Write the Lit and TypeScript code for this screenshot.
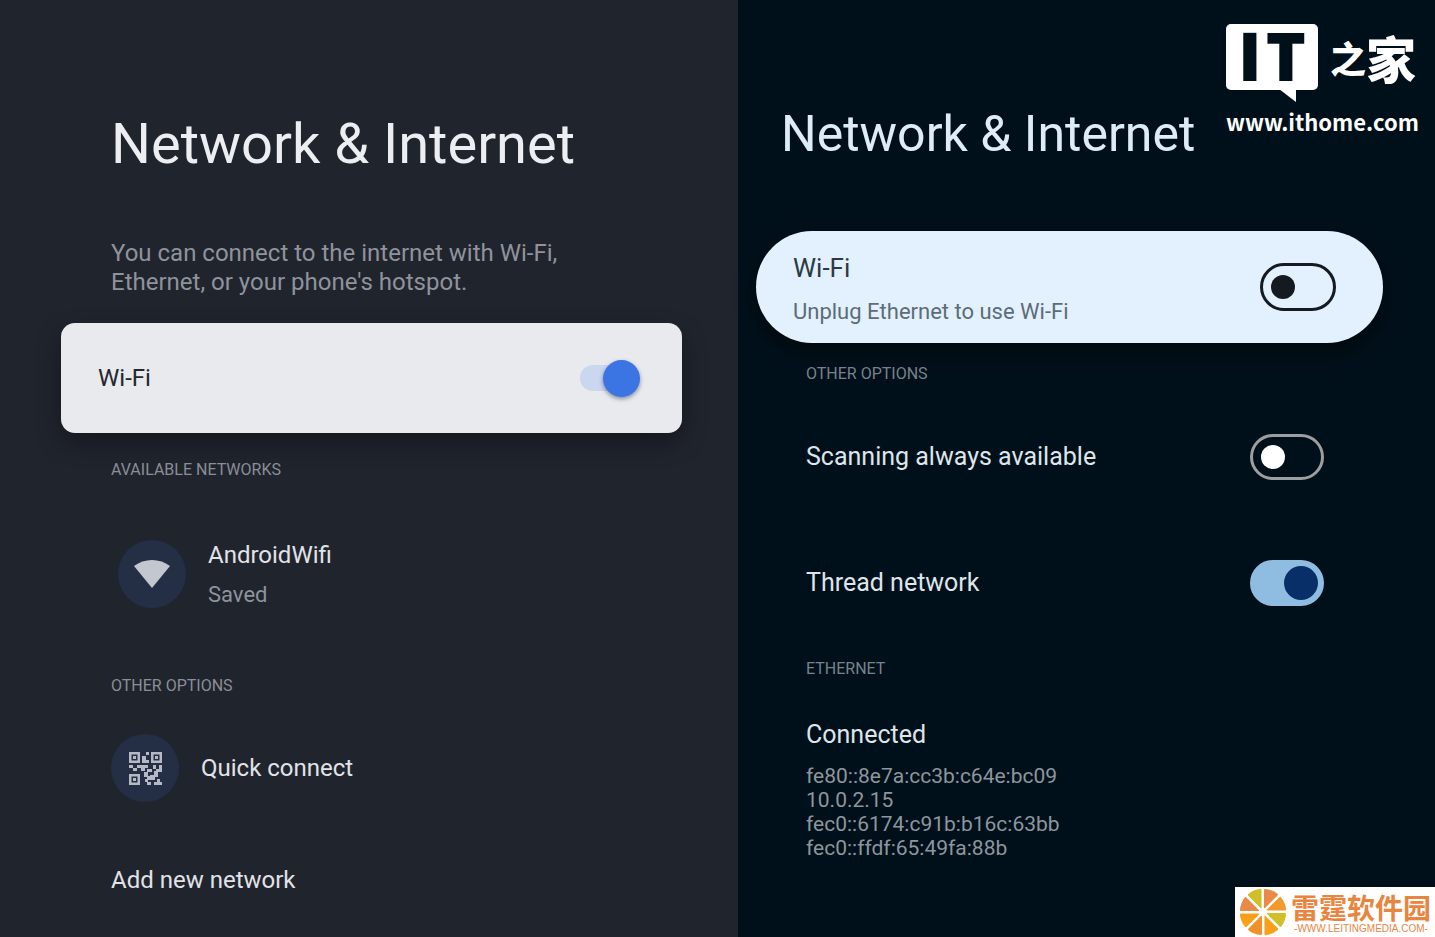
import { LitElement, html, css, svg } from "lit";
import { customElement } from "lit/decorators.js";

@customElement("tv-mark")
class TvMark extends LitElement {
  static styles = css`
    :host { display: block; color: #fff; }
    .logo { display: flex; align-items: center; }
    .bubble { position: relative; box-sizing: border-box; width: 93px; height: 66px; display: flex; justify-content: center; gap: 4px; border-radius: 5px; background: #fff; color: #00101a; font: 800 68px/62px "Open Sans", sans-serif; white-space: nowrap; }
    .tail { position: absolute; left: 53px; top: 65px; width: 17px; height: 13px; }
    .zhi, .jia { font-family: "Noto Sans CJK SC", sans-serif; font-weight: 900; line-height: 66px; }
    .zhi { font-size: 36px; margin-left: 12px; }
    .jia { font-size: 50px; }
    .site { margin-top: 16px; color: #fff; font: 700 22px/30px "Noto Sans CJK SC", sans-serif; text-decoration: none; display: block; }
  `;
  render() {
    return html`
      <div class="logo">
        <span class="bubble"><span>I</span><span>T</span><svg class="tail" viewBox="0 0 17 13"><path d="M0 0H17V13Z" fill="#fff"/></svg></span>
        <span class="zhi">之</span><span class="jia">家</span>
      </div>
      <a class="site" href="#">www.ithome.com</a>`;
  }
}

@customElement("app-root")
class AppRoot extends LitElement {
  static styles = css`
    :host { display: grid; grid-template-columns: 738fr 697fr; min-height: 100vh; position: relative; font-family: Roboto, sans-serif; background: #00101a; overflow: hidden; }
    h1, h2, p, dl, dd, dt { margin: 0; font-weight: 400; }
    .panel { box-sizing: border-box; }
    .classic { background: #20242d; padding: 112px 56px 40px 61px; color: #e1e3e8; }
    .modern { background: #00101a; padding: 102px 52px 40px 18px; color: #dfe5ea; }
    .inset { margin-left: 50px; }
    h1 { font-size: 56px; line-height: 64px; color: #eceef1; }
    .modern h1 { font-size: 50px; margin-left: 25px; color: #dfecf7; }
    .intro { margin-top: 63px; font-size: 24px; line-height: 29px; color: #8f939b; max-width: 480px; }
    .card { display: flex; align-items: center; justify-content: space-between; box-sizing: border-box; cursor: pointer; }
    .classic .card { margin-top: 26px; height: 110px; padding: 0 42px 0 37px; border-radius: 14px; background: #e8eaed; color: #24272d; box-shadow: 0 10px 24px rgba(0, 0, 0, 0.35); }
    .modern .card { margin-top: 65px; height: 112px; padding: 0 47px 0 37px; border-radius: 56px; background: #e2f1fd; color: #2c3a45; box-shadow: 0 8px 20px rgba(0, 0, 0, 0.5); }
    .lines { display: flex; flex-direction: column; gap: 10px; }
    .modern .lines { gap: 14px; padding-top: 4px; }
    .title { font-size: 24px; line-height: 32px; }
    .modern .title { font-size: 25px; }
    .modern .card .title { font-size: 26px; }
    .sub { font-size: 22px; line-height: 28px; color: #8f939b; }
    .modern .sub { color: #5c6c78; }
    h2 { font-size: 16px; line-height: 20px; color: #8a8e96; }
    .classic h2 { margin-top: 27px; }
    .modern h2 { color: #78828a; margin-top: 21px; }
    .item { display: flex; align-items: center; gap: 22px; border: 0; padding: 0; background: none; color: inherit; font: inherit; text-align: left; cursor: pointer; }
    .network { margin-top: 59px; padding-left: 7px; }
    .classic .later { margin-top: 67px; }
    .quick { margin-top: 38px; }
    .add { margin-top: 62px; }
    .disc { width: 68px; height: 68px; border-radius: 50%; background: #242e44; display: grid; place-items: center; }
    .wifi { width: 36px; height: 28px; }
    .qr { width: 33px; height: 33px; }
    .option { display: flex; align-items: center; justify-content: space-between; height: 46px; margin-right: 59px; cursor: pointer; }
    .scan { margin-top: 50px; }
    .thread { margin-top: 80px; }
    .modern .later { margin-top: 53px; }
    .switch { appearance: none; margin: 0; box-sizing: border-box; width: 74px; height: 46px; border-radius: 24px; border: 3px solid #9c9fa2; display: flex; align-items: center; padding: 0 8px; cursor: pointer; }
    .switch::before { content: ""; width: 24px; height: 24px; border-radius: 50%; background: #fff; }
    .switch:checked { background: #8fbde2; border-color: #8fbde2; justify-content: flex-end; padding: 0 3px; }
    .switch:checked::before { width: 34px; height: 34px; background: #082f68; }
    .card .switch { width: 76px; height: 48px; border-color: #141a20; }
    .card .switch::before { background: #141a20; }
    .slider { appearance: none; position: relative; margin: 0; width: 60px; height: 38px; display: flex; align-items: center; justify-content: flex-end; cursor: pointer; }
    .slider::after { content: ""; position: absolute; left: 0; top: 6px; width: 50px; height: 26px; border-radius: 13px; background: #cbd7ef; }
    .slider::before { content: ""; position: relative; z-index: 1; width: 37px; height: 37px; border-radius: 50%; background: #3b75e3; box-shadow: 0 2px 4px rgba(30, 50, 90, 0.5); }
    .status { margin-top: 40px; }
    .status dt { font-size: 25px; line-height: 32px; }
    .status dd { font-size: 21px; line-height: 24px; color: #8d969d; }
    .status dt + dd { margin-top: 13px; }
    .mark { position: absolute; right: 19px; top: 24px; width: 190px; }
    .badge { position: absolute; right: 0; bottom: 0; box-sizing: border-box; width: 200px; height: 50px; padding: 1px 4px; background: #fff; display: flex; align-items: center; gap: 4px; }
    .fruit { width: 48px; height: 48px; flex: none; }
    .brand { display: flex; flex-direction: column; align-items: center; color: #e8853f; white-space: nowrap; }
    .name { font: 700 28px/34px "Noto Sans CJK SC", sans-serif; }
    .url { font: 10px/10px "Liberation Sans", sans-serif; }
  `;

  private slice(i: number, fill: string) {
    return svg`<path transform="rotate(${i * 45} 24 24)" fill=${fill} d="M25 19.500V2Q25 .8 26.200 .9Q33 1.500 38.500 5.700Q39.400 6.500 38.500 7.400L26.600 19.400Q25 21 25 19.500Z"/>`;
  }

  render() {
    const fills = ["#e98a48", "#f39a2c", "#d0bf28", "#f9a01b", "#f0922c", "#f9a01b", "#e98a48", "#d0bf28"];
    return html`
      <section class="panel classic">
        <h1 class="inset">Network &amp; Internet</h1>
        <p class="intro inset">You can connect to the internet with Wi-Fi, Ethernet, or your phone's hotspot.</p>
        <label class="card" for="wifi-a"><span class="title">Wi-Fi</span><input class="slider" id="wifi-a" type="checkbox" checked></label>
        <h2 class="inset">AVAILABLE NETWORKS</h2>
        <button class="item inset network">
          <span class="disc"><svg class="wifi" viewBox="0 0 36 28"><path fill="#c3c7ce" d="M18 28 0 6Q8 0 18 0T36 6Z"/></svg></span>
          <span class="lines"><span class="title">AndroidWifi</span><span class="sub">Saved</span></span>
        </button>
        <h2 class="inset later">OTHER OPTIONS</h2>
        <button class="item inset quick">
          <span class="disc"><svg class="qr" viewBox="0 0 33 33" fill="#b4b9c4"><path fill-rule="evenodd" d="M0 0H11V11H0ZM2.500 2.500V8.500H8.500V2.500ZM22 0H33V11H22ZM24.500 2.500V8.500H30.500V2.500ZM0 22H11V33H0ZM2.500 24.500V30.500H8.500V24.500Z"/><path d="M4 4h3v3H4zM26 4h3v3h-3zM4 26h3v3H4zM17 0h3v3h-3zM13 4h4v4h3v3h-7zM0 13h4v3H0zM4 16h4v3H4zM8 13h11v3h-3v3h-4v-3H8zM18 17h5v3h-5zM24 13h3v4h-3zM27 17h3v-4h3v7h-4v2h-4v-3h2zM15 20h4v4h3v4h-4v-3h-3zM21 23h4v-2h4v4h-3v3h-5zM16 27h3v3h3v3h-4v-3h-2zM25 30h3v-3h3v3h2v3h-8z"/></svg></span>
          <span class="title">Quick connect</span>
        </button>
        <button class="item inset add"><span class="title">Add new network</span></button>
      </section>
      <section class="panel modern">
        <h1>Network &amp; Internet</h1>
        <label class="card" for="wifi-b">
          <span class="lines"><span class="title">Wi-Fi</span><span class="sub">Unplug Ethernet to use Wi-Fi</span></span>
          <input class="switch" id="wifi-b" type="checkbox">
        </label>
        <h2 class="inset">OTHER OPTIONS</h2>
        <label class="option inset scan" for="scan"><span class="title">Scanning always available</span><input class="switch" id="scan" type="checkbox"></label>
        <label class="option inset thread" for="thread"><span class="title">Thread network</span><input class="switch" id="thread" type="checkbox" checked></label>
        <h2 class="inset later">ETHERNET</h2>
        <dl class="status inset">
          <dt>Connected</dt>
          <dd>fe80::8e7a:cc3b:c64e:bc09</dd>
          <dd>10.0.2.15</dd>
          <dd>fec0::6174:c91b:b16c:63bb</dd>
          <dd>fec0::ffdf:65:49fa:88b</dd>
        </dl>
      </section>
      <tv-mark class="mark"></tv-mark>
      <div class="badge">
        <svg class="fruit" viewBox="0 0 48 48">${fills.map((f, i) => this.slice(i, f))}</svg>
        <div class="brand"><span class="name">雷霆软件园</span><span class="url">-WWW.LEITINGMEDIA.COM-</span></div>
      </div>`;
  }
}
